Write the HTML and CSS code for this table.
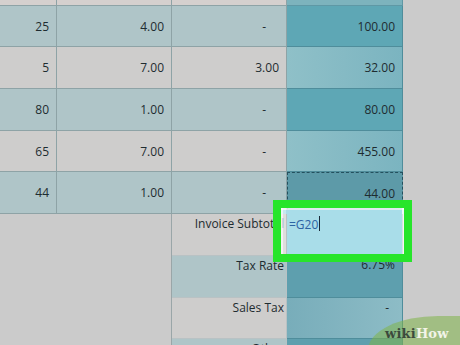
FILE: index.html
```html
<!DOCTYPE html>
<html>
<head>
<meta charset="utf-8">
<link rel="stylesheet" href="styles.css">
</head>
<body>
<div class="sheet">
  <div class="c strip"></div><div class="c strip"></div><div class="c strip"></div><div class="c strip d"></div><div class="rest"></div>

  <div class="c tealrow">25</div><div class="c tealrow">4.00</div><div class="c tealrow"><span class="dash">-</span></div><div class="c d dk">100.00</div><div class="rest"></div>
  <div class="c grayrow">5</div><div class="c grayrow">7.00</div><div class="c grayrow">3.00</div><div class="c d lt">32.00</div><div class="rest"></div>
  <div class="c tealrow">80</div><div class="c tealrow">1.00</div><div class="c tealrow"><span class="dash">-</span></div><div class="c d dk">80.00</div><div class="rest"></div>
  <div class="c grayrow">65</div><div class="c grayrow">7.00</div><div class="c grayrow"><span class="dash">-</span></div><div class="c d lt">455.00</div><div class="rest"></div>
  <div class="c tealrow">44</div><div class="c tealrow">1.00</div><div class="c tealrow"><span class="dash">-</span></div><div class="c d copy">44.00</div><div class="rest"></div>

  <div class="blank"></div><div class="c label grayrow">Invoice Subtotal</div><div class="c val editing"><span class="formula">=G20</span><span class="caret"></span></div><div class="rest"></div>
  <div class="blank"></div><div class="c label tealrow">Tax Rate</div><div class="c val d dk2"><span class="rate">6.75%</span></div><div class="rest"></div>
  <div class="blank"></div><div class="c label grayrow">Sales Tax</div><div class="c val d lt2"><span class="dash2">-</span></div><div class="rest"></div>
  <div class="blank"></div><div class="c label tealrow">Other</div><div class="c val d dk2"></div><div class="rest"></div>
</div>
<div class="logo"><span class="wiki">wiki</span><span class="how">How</span></div>
</body>
</html>
```
FILE: styles.css
```css
html, body {
  margin: 0;
  padding: 0;
}
body {
  width: 460px;
  height: 345px;
  overflow: hidden;
  background: #cbcbcb;
  font-family: "Open Sans", "Liberation Sans", sans-serif;
  font-size: 12px;
  color: #1e2c30;
  position: relative;
}
.sheet {
  display: grid;
  grid-template-columns: 57px 115px 115px 116px 1fr;
  grid-template-rows: 6px 41px 42px 42px 41px 42px 42px 42px 41px 42px;
}
.c {
  box-sizing: border-box;
  border-right: 1px solid #8ea3a6;
  border-bottom: 1px solid #8ea3a6;
  display: flex;
  align-items: center;
  justify-content: flex-end;
  padding-right: 7px;
  white-space: nowrap;
}
.strip { background: #d5d0ce; }
.strip.d { background: #7db3bd; border-color: #5f98a5; }
.rest { background: #cbcbcb; }
.tealrow { background: #afc5c8; }
.grayrow { background: #cecdcc; }
.d { border-color: #4f8d9b; }
.dk { background: #5ea7b5; }
.lt { background: linear-gradient(to right, #8fc0c8, #7bb4c0); }
.copy {
  background: #5d9aa8;
  border: 1px dashed #24505e;
}
.dash { padding-right: 13px; }
.blank {
  grid-column: span 2;
  border-right: 1px solid #9aa6a8;
  background: #cbcbcb;
}
.label {
  align-items: flex-start;
  padding-top: 1px;
  padding-right: 2px;
  overflow: visible;
  border-color: #b9c2c4;
}
.val {
  align-items: flex-start;
  padding-top: 1px;
}
.rate { margin-top: -1px; }
.dk2 { background: #5e9fae; }
.lt2 { background: linear-gradient(to right, #78adba, #8dbcc6); }
.dash2 { padding-right: 6px; }
.editing {
  position: relative;
  background: #a9dde9;
  border-right: 1px solid #3d6c78;
  border-bottom: 1px solid #3d6c78;
  justify-content: flex-start;
  padding-left: 2px;
  padding-top: 2px;
}
.editing::before {
  content: "";
  position: absolute;
  left: -14px;
  top: -14px;
  width: 139px;
  height: 62px;
  box-sizing: border-box;
  border: 8px solid #27e52b;
  background:
    linear-gradient(to right, rgba(255,255,255,0.75) 0 2px, rgba(255,255,255,0.35) 2px 5px, transparent 5px),
    linear-gradient(to bottom, rgba(255,255,255,0.8) 0 2px, #a9dde9 2px 6px, transparent 6px);
  box-shadow: inset -2px 0 0 rgba(255,255,255,0.8);
  z-index: 2;
}
.formula {
  color: #2d63a3;
  position: relative;
  z-index: 3;
}
.caret {
  display: inline-block;
  width: 1px;
  height: 15px;
  background: #1a2a3a;
  margin-left: 1px;
  position: relative;
  z-index: 3;
}
.logo {
  position: absolute;
  left: 368px;
  top: 316px;
  width: 100px;
  height: 40px;
  border-top-left-radius: 70px 34px;
  background: rgba(128, 180, 72, 0.55);
  font-family: "DejaVu Serif", serif;
  font-weight: bold;
  font-size: 13px;
  padding: 10px 0 0 17px;
  box-sizing: border-box;
  letter-spacing: 0.2px;
}
.wiki { color: #3b4a3c; }
.how { color: #f2f4e8; }
```
